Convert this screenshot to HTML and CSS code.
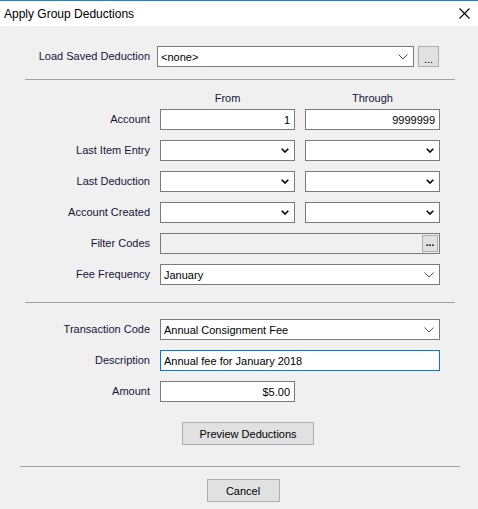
FILE: index.html
```html
<!DOCTYPE html>
<html lang="en">
<head>
    <meta charset="UTF-8">
    <meta name="viewport" content="width=device-width, initial-scale=1.0">
    <title>Apply Group Deductions</title>
    <link rel="stylesheet" href="styles.css">
</head>
<body>
    <div class="titlebar">
        <span class="title">Apply Group Deductions</span>
        <svg class="close" width="11" height="11" viewBox="0 0 11 11">
            <path d="M0.5 0.5 L10.5 10.5 M10.5 0.5 L0.5 10.5" stroke="#000" stroke-width="1.1" fill="none"/>
        </svg>
    </div>

    <div class="dialog">
        <div class="load-row">
            <span class="label">Load Saved Deduction</span>
            <div class="field combo load-combo">
                <span class="value">&lt;none&gt;</span>
                <svg class="chev light" width="10" height="6" viewBox="0 0 10 6"><path d="M0.5 0.5 L5 5 L9.5 0.5" stroke="#555" fill="none"/></svg>
            </div>
            <button class="dots">...</button>
        </div>

        <div class="sep"></div>

        <div class="heads">
            <span>From</span>
            <span>Through</span>
        </div>

        <div class="rows">
            <div class="row">
                <span class="label">Account</span>
                <div class="field half num">1</div>
                <div class="field half num">9999999</div>
            </div>
            <div class="row">
                <span class="label">Last Item Entry</span>
                <div class="field half combo"><svg class="chev" width="8" height="5" viewBox="0 0 8 5"><path d="M0.7 0.7 L4 4 L7.3 0.7" stroke="#000" stroke-width="1.6" fill="none"/></svg></div>
                <div class="field half combo"><svg class="chev" width="8" height="5" viewBox="0 0 8 5"><path d="M0.7 0.7 L4 4 L7.3 0.7" stroke="#000" stroke-width="1.6" fill="none"/></svg></div>
            </div>
            <div class="row">
                <span class="label">Last Deduction</span>
                <div class="field half combo"><svg class="chev" width="8" height="5" viewBox="0 0 8 5"><path d="M0.7 0.7 L4 4 L7.3 0.7" stroke="#000" stroke-width="1.6" fill="none"/></svg></div>
                <div class="field half combo"><svg class="chev" width="8" height="5" viewBox="0 0 8 5"><path d="M0.7 0.7 L4 4 L7.3 0.7" stroke="#000" stroke-width="1.6" fill="none"/></svg></div>
            </div>
            <div class="row">
                <span class="label">Account Created</span>
                <div class="field half combo"><svg class="chev" width="8" height="5" viewBox="0 0 8 5"><path d="M0.7 0.7 L4 4 L7.3 0.7" stroke="#000" stroke-width="1.6" fill="none"/></svg></div>
                <div class="field half combo"><svg class="chev" width="8" height="5" viewBox="0 0 8 5"><path d="M0.7 0.7 L4 4 L7.3 0.7" stroke="#000" stroke-width="1.6" fill="none"/></svg></div>
            </div>
            <div class="row">
                <span class="label">Filter Codes</span>
                <div class="field full disabled">
                    <button class="mini-dots">...</button>
                </div>
            </div>
            <div class="row">
                <span class="label">Fee Frequency</span>
                <div class="field full combo">
                    <span class="value">January</span>
                    <svg class="chev light" width="10" height="6" viewBox="0 0 10 6"><path d="M0.5 0.5 L5 5 L9.5 0.5" stroke="#555" fill="none"/></svg>
                </div>
            </div>
        </div>

        <div class="sep sep2"></div>

        <div class="rows tx">
            <div class="row">
                <span class="label">Transaction Code</span>
                <div class="field full combo">
                    <span class="value">Annual Consignment Fee</span>
                    <svg class="chev light" width="10" height="6" viewBox="0 0 10 6"><path d="M0.5 0.5 L5 5 L9.5 0.5" stroke="#555" fill="none"/></svg>
                </div>
            </div>
            <div class="row">
                <span class="label">Description</span>
                <div class="field full focused"><span class="value">Annual fee for January 2018</span></div>
            </div>
            <div class="row">
                <span class="label">Amount</span>
                <div class="field half num">$5.00</div>
            </div>
        </div>

        <div class="actions">
            <button class="btn preview">Preview Deductions</button>
        </div>

        <div class="sep sep3"></div>

        <div class="actions cancel-wrap">
            <button class="btn cancel">Cancel</button>
        </div>
    </div>
</body>
</html>
```

FILE: styles.css
```css
body {
    margin: 0;
    padding: 0;
    background: #f0f0f0;
    font-family: "Liberation Sans", Arial, sans-serif;
    font-size: 11px;
    color: #000;
}

.titlebar {
    height: 26px;
    border-top: 1px solid #1883d7;
    background: #fff;
    display: flex;
    align-items: center;
    justify-content: space-between;
    padding: 0 8px 0 4px;
    box-sizing: border-box;
}

.title {
    font-size: 12px;
}

.dialog {
    padding-top: 20px;
}

.label {
    width: 150px;
    text-align: right;
    color: #14143c;
    flex-shrink: 0;
    margin-top: -1px;
}

.load-row {
    display: flex;
    align-items: center;
    height: 21px;
}

.field {
    height: 21px;
    box-sizing: border-box;
    border: 1px solid #7a7a7a;
    background: #fff;
    display: flex;
    align-items: center;
    padding: 0 3px;
}

.load-combo {
    margin-left: 7px;
    width: 257px;
}

.combo {
    justify-content: space-between;
}

.combo .chev {
    margin-left: auto;
    margin-right: 2px;
}

.dots {
    margin-left: 4px;
    width: 21px;
    height: 21px;
    padding: 5px 0 0;
    border: 1px solid #adadad;
    background: #e1e1e1;
    font-family: inherit;
    font-size: 11px;
    line-height: 1;
}

.sep {
    height: 1px;
    background: #a0a0a0;
    margin: 12px 23px 0 25px;
}

.heads {
    display: flex;
    margin-top: 12px;
    height: 13px;
    line-height: 13px;
    color: #14143c;
}

.heads span {
    width: 135px;
    text-align: center;
}

.heads span:first-child {
    margin-left: 160px;
}

.heads span + span {
    margin-left: 10px;
}

.rows {
    display: flex;
    flex-direction: column;
    gap: 10px;
    margin-top: 4px;
}

.row {
    display: flex;
    align-items: center;
    gap: 10px;
}

.half {
    width: 135px;
}

.full {
    width: 280px;
}

.num {
    justify-content: flex-end;
    padding-right: 4px;
}

.disabled {
    background: #f0f0f0;
    justify-content: flex-end;
    padding-right: 1px;
}

.mini-dots {
    width: 16px;
    height: 17px;
    border: 1px solid #adadad;
    background: #e1e1e1;
    padding: 0 0 2px;
    font-size: 10px;
    font-weight: bold;
    line-height: 1;
    font-family: inherit;
}

.focused {
    border-color: #0078d7;
}

.sep2 {
    margin-top: 17px;
}

.tx {
    margin-top: 16px;
}

.actions {
    display: flex;
    justify-content: center;
    margin-top: 20px;
}

.btn {
    height: 23px;
    border: 1px solid #adadad;
    background: #e1e1e1;
    font-family: inherit;
    font-size: 11px;
    color: #000;
    padding: 0;
}

.preview {
    width: 132px;
    margin-left: 18px;
}

.sep3 {
    margin: 21px 18px 0 20px;
}

.cancel-wrap {
    margin-top: 12px;
}

.cancel {
    width: 73px;
    margin-left: 8px;
}
```
